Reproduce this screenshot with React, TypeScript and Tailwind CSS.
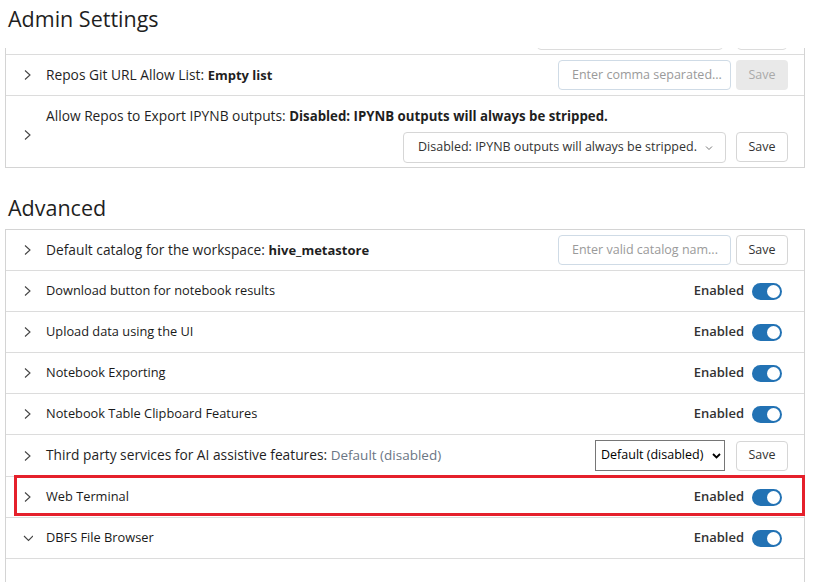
import React from "react";

const font = { fontFamily: '"Segoe UI", "Open Sans", "Noto Sans", sans-serif' };

function Chevron({ open = false }: { open?: boolean }) {
  return open ? (
    <svg className="w-[10px] h-[10px] text-[#444]" viewBox="0 0 10 10" fill="none" stroke="currentColor" strokeWidth={1.1}>
      <path d="M1 3l4.5 4.5L10 3" />
    </svg>
  ) : (
    <svg className="w-[10px] h-[10px] text-[#444]" viewBox="0 0 10 10" fill="none" stroke="currentColor" strokeWidth={1.1}>
      <path d="M2 0.5l5 4.5-5 4.5" />
    </svg>
  );
}

function Toggle() {
  return (
    <div className="w-[30px] h-[17px] rounded-full bg-[#2272b4] flex items-center justify-end pr-[2px]">
      <div className="w-[13px] h-[13px] rounded-full bg-white" />
    </div>
  );
}

function SaveButton({ disabled = false }: { disabled?: boolean }) {
  return disabled ? (
    <div className="w-[52px] h-[30px] rounded-[4px] bg-[#e9e9e9] text-[#a9a9a9] text-[12.5px] flex items-center justify-center">
      Save
    </div>
  ) : (
    <div className="w-[52px] h-[30px] rounded-[4px] border border-[#d6d6d6] bg-white text-[#333] text-[12.5px] flex items-center justify-center">
      Save
    </div>
  );
}

function TextInput({ placeholder, width }: { placeholder: string; width: string }) {
  return (
    <div className={`${width} h-[30px] rounded-[4px] border border-[#cfdbe6] pl-[13px] flex items-center text-[12.5px] text-[#9a9a9a] truncate`}>
      {placeholder}
    </div>
  );
}

// labels ending in a colon are regular weight, plain titles are a bit heavier
function Row({
  children,
  right,
  open,
  highlight,
  plain,
}: {
  children: React.ReactNode;
  right?: React.ReactNode;
  open?: boolean;
  highlight?: boolean;
  plain?: boolean;
}) {
  return (
    <div className="relative flex items-center h-[41px] border-b border-[#dcdcdc] pl-[17px] pr-[16px]">
      <Chevron open={open} />
      <div
        className={
          plain
            ? "ml-[13px] flex-1 text-[12.8px] font-medium text-[#1a1a1a]"
            : "ml-[13px] flex-1 text-[13.75px] text-[#1f1f1f]"
        }
      >
        {children}
      </div>
      {right}
      {highlight && (
        <div className="absolute left-[8px] right-[-1px] top-[-2px] h-[41px] border-[3px] border-[#e5202b]" />
      )}
    </div>
  );
}

function Enabled() {
  return (
    <div className="flex items-center gap-[8px] pr-[6px]">
      <span className="text-[13px] font-semibold text-[#333]">Enabled</span>
      <Toggle />
    </div>
  );
}

export default function App() {
  return (
    <div className="w-[834px] h-[582px] overflow-hidden bg-white" style={font}>
      <div className="h-[48px] pl-[8px] pt-[3px] text-[21.5px] leading-[32px] text-[#1f1f1f]">Admin Settings</div>

      <div className="ml-[5px] w-[800px] border-x border-b border-[#d4d4d4]">
        <div className="h-[7px] overflow-hidden border-b border-[#dcdcdc] flex items-end justify-end gap-[14px] pr-[17px] pb-[4px]">
          <div className="w-[186px] h-[30px] shrink-0 rounded-[4px] border border-[#dcdcdc]" />
          <div className="w-[50px] h-[30px] shrink-0 rounded-[4px] border border-[#dcdcdc]" />
        </div>
        <Row
          right={
            <div className="flex gap-[5px]">
              <TextInput placeholder="Enter comma separated..." width="w-[173px]" />
              <SaveButton disabled />
            </div>
          }
        >
          Repos Git URL Allow List: <span className="font-bold text-[13px]">Empty list</span>
        </Row>
        <div className="flex items-center pl-[17px] pr-[16px] pt-[10px] pb-[4px]">
          <Chevron />
          <div className="ml-[13px] flex-1 flex flex-col">
            <div className="text-[13.75px] text-[#1f1f1f] leading-[20px]">
              Allow Repos to Export IPYNB outputs:{" "}
              <span className="font-bold text-[13.25px]">Disabled: IPYNB outputs will always be stripped.</span>
            </div>
            <div className="flex justify-end gap-[10px] mt-[6px]">
              <div className="w-[323px] h-[31px] rounded-[4px] border border-[#d6d6d6] pl-[14px] pr-[12px] flex items-center justify-between text-[12.5px] text-[#333]">
                <span>Disabled: IPYNB outputs will always be stripped.</span>
                <svg className="w-[8px] h-[8px] text-[#777]" viewBox="0 0 8 8" fill="none" stroke="currentColor" strokeWidth={1}>
                  <path d="M1 2.5l3 3 3-3" />
                </svg>
              </div>
              <SaveButton />
            </div>
          </div>
        </div>
      </div>

      <div className="h-[61px] pl-[8px] pt-[24px] text-[21.5px] leading-[32px] text-[#1f1f1f]">Advanced</div>

      <div className="ml-[5px] w-[800px] border-x border-t border-[#d4d4d4] h-[400px]">
        <Row
          right={
            <div className="flex gap-[5px]">
              <TextInput placeholder="Enter valid catalog nam..." width="w-[173px]" />
              <SaveButton />
            </div>
          }
        >
          Default catalog for the workspace: <span className="font-bold text-[13px]">hive_metastore</span>
        </Row>
        <Row right={<Enabled />} plain>
          Download button for notebook results
        </Row>
        <Row right={<Enabled />} plain>
          Upload data using the UI
        </Row>
        <Row right={<Enabled />} plain>
          Notebook Exporting
        </Row>
        <Row right={<Enabled />} plain>
          Notebook Table Clipboard Features
        </Row>
        <div className="flex items-center h-[42px] border-b border-[#dcdcdc] pl-[17px] pr-[16px]">
          <Chevron />
          <div className="ml-[13px] flex-1 text-[13.75px] text-[#1f1f1f]">
            Third party services for AI assistive features: <span className="text-[#6b7684] text-[13.5px]">Default (disabled)</span>
          </div>
          <div className="flex gap-[11px] items-center">
            <div className="w-[130px] h-[31px] border border-[#767676] pl-[5px] pr-[3px] flex items-center justify-between text-[12.5px] text-black">
              <span>Default (disabled)</span>
              <svg className="w-[9px] h-[9px]" viewBox="0 0 9 9" fill="none" stroke="black" strokeWidth={1.8}>
                <path d="M1 3l3.5 3.5L8 3" />
              </svg>
            </div>
            <SaveButton />
          </div>
        </div>
        <Row right={<Enabled />} highlight plain>
          Web Terminal
        </Row>
        <Row right={<Enabled />} open plain>
          DBFS File Browser
        </Row>
      </div>
    </div>
  );
}
